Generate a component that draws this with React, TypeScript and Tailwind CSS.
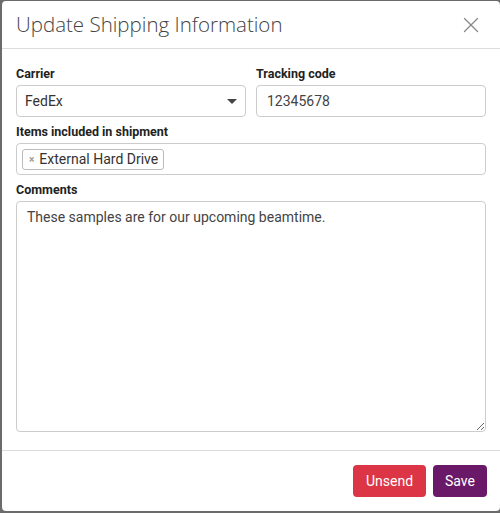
import { X } from "lucide-react";

const font = { fontFamily: 'Roboto, "Open Sans", sans-serif' };
const titleFont = { fontFamily: '"Open Sans", "Noto Sans", sans-serif' };

function Label({ children }: { children: React.ReactNode }) {
  return <label className="mb-[3px] block text-[12.5px] font-bold leading-[16px] text-[#222]">{children}</label>;
}

export default function App() {
  return (
    <div className="flex h-[513px] w-[500px] bg-[#6b6b6b] pl-[2px] pt-[1px]" style={font}>
      <div className="flex h-[510px] flex-1 flex-col rounded-[4px] bg-white">
        <div className="flex h-[48px] shrink-0 items-center justify-between border-b border-[#dcdcdc] pl-[14px] pr-[16px]">
          <h1 className="text-[20.5px] font-light leading-none text-[#444]" style={titleFont}>
            Update Shipping Information
          </h1>
          <button type="button" className="text-[#888]">
            <X size={26} strokeWidth={1.2} />
          </button>
        </div>

        <div className="flex flex-1 flex-col px-[14px] pt-[17px]">
          <div className="grid grid-cols-2 gap-[10px]">
            <div>
              <Label>Carrier</Label>
              <div className="flex h-[32px] items-center justify-between rounded-[4px] border border-[#ccc] px-[8px] text-[14px] text-[#333]">
                <span>FedEx</span>
                <span className="h-0 w-0 border-x-[5px] border-t-[5px] border-x-transparent border-t-[#444]" />
              </div>
            </div>
            <div>
              <Label>Tracking code</Label>
              <div className="flex h-[32px] items-center rounded-[4px] border border-[#ccc] px-[10px] text-[14px] text-[#444]">
                12345678
              </div>
            </div>
          </div>

          <div className="mt-[7px]">
            <Label>Items included in shipment</Label>
            <div className="flex h-[32px] items-center rounded-[4px] border border-[#ccc] px-[5px]">
              <span className="flex h-[21px] items-center gap-[5px] rounded-[3px] border border-[#bbb] bg-[#fff] pl-[6px] pr-[5px] text-[14px] text-[#333]">
                <span className="text-[10px] font-bold text-[#999]">×</span>
                External Hard Drive
              </span>
            </div>
          </div>

          <div className="mt-[7px]">
            <Label>Comments</Label>
            <textarea
              className="block h-[231px] w-full resize-y rounded-[4px] border border-[#ccc] px-[10px] py-[5px] text-[14px] text-[#444] outline-none"
              defaultValue="These samples are for our upcoming beamtime."
            />
          </div>
        </div>

        <div className="flex h-[61px] shrink-0 items-center justify-end gap-[7px] border-t border-[#dcdcdc] pr-[13px]">
          <button type="button" className="h-[32px] rounded-[4px] bg-[#dc3545] px-[13px] text-[14px] text-white">
            Unsend
          </button>
          <button type="button" className="h-[32px] rounded-[4px] bg-[#6a1968] px-[12px] text-[14px] text-white">
            Save
          </button>
        </div>
      </div>
    </div>
  );
}
